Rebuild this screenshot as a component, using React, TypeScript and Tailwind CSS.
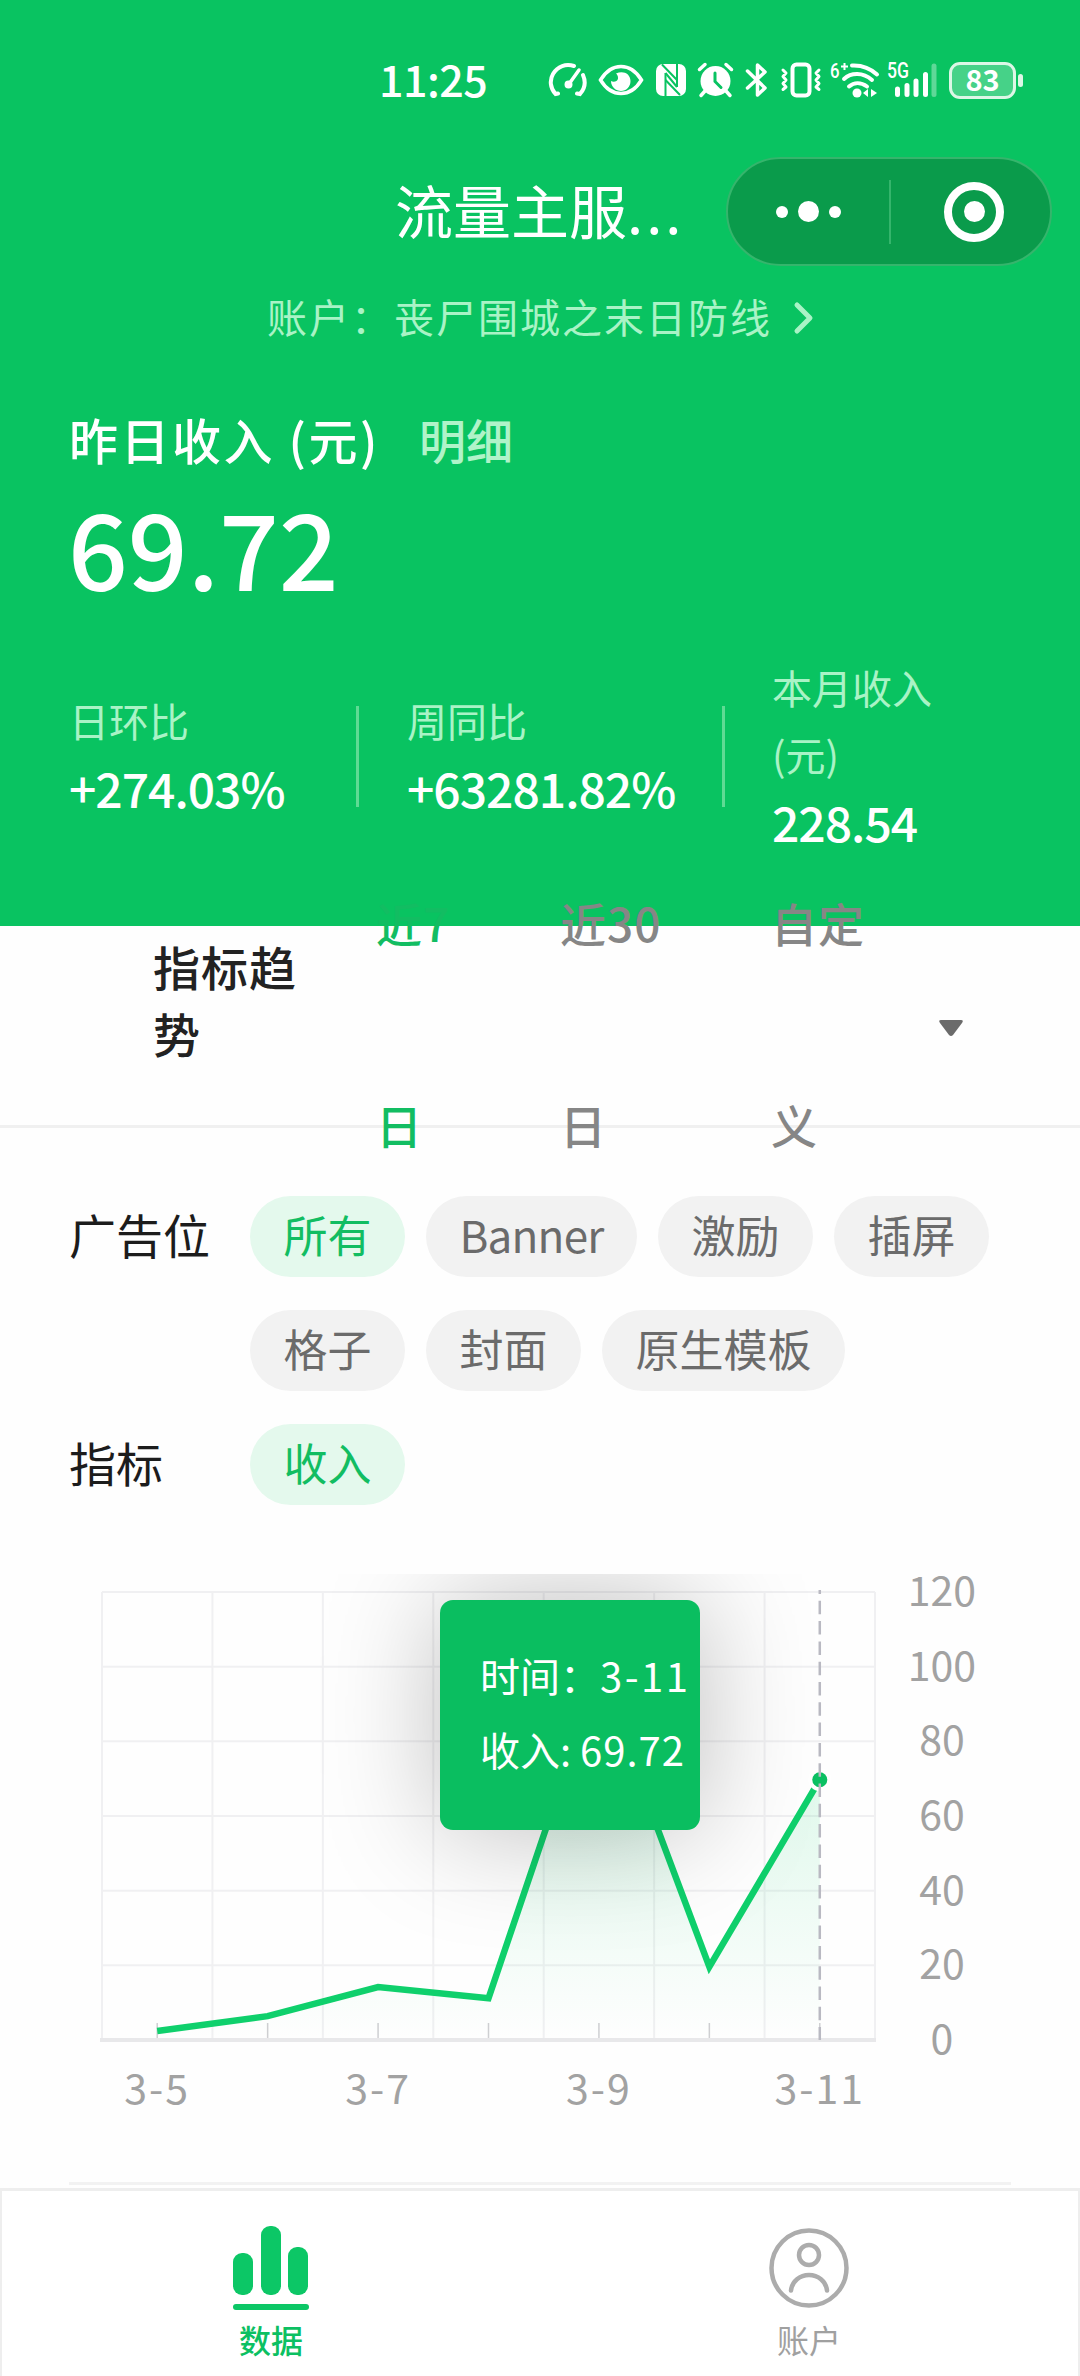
import clsx from "clsx";
import React from "react";

const stats = [
  { label: ["日环比"], value: "+274.03%" },
  { label: ["周同比"], value: "+63281.82%" },
  { label: ["本月收入", "(元)"], value: "228.54" },
];

const ranges = [
  { active: true, className: "ml-[76px] w-[184px]", lines: ["近7", "日"] },
  { className: "w-[211px]", lines: ["近30", "日"] },
  { className: "w-[167px]", lines: ["自定", "义"] },
];

const filters = [
  {
    label: "广告位",
    options: ["所有", "Banner", "激励", "插屏", "格子", "封面", "原生模板"],
  },
  { label: "指标", options: ["收入"] },
];

const points = [
  { date: "3-5", value: 2.4 },
  { date: "3-6", value: 6.4 },
  { date: "3-7", value: 14.2 },
  { date: "3-8", value: 11.2 },
  { date: "3-9", value: 98.5 },
  { date: "3-10", value: 19.6 },
  { date: "3-11", value: 69.72 },
];

const PLOT = { bottom: 466, left: 102, right: 875, top: 18 };
const STEP = (PLOT.right - PLOT.left) / points.length;
const toX = (index: number) => PLOT.left + STEP * (index + 0.5);
const toY = (value: number) =>
  PLOT.bottom - (value / 120) * (PLOT.bottom - PLOT.top);

const StatusIcons = () => (
  <div className="flex items-center text-white">
    <svg width="40" height="36" viewBox="0 0 40 36" fill="none" stroke="currentColor" strokeWidth="4" strokeLinecap="round">
      <path d="M10 31.5 7.5 32C2 26 1.500 18 5 12 9.500 4 18 1.500 26 4" />
      <path d="M35 13c3 7 1.500 14-3 19l-3-.5" />
      <path d="m21 22 10-14" strokeWidth="3.500" />
      <circle cx="20.500" cy="22.500" r="3" fill="currentColor" strokeWidth="2" />
    </svg>
    <svg className="ml-2.5" width="46" height="32" viewBox="0 0 46 32" fill="none" stroke="currentColor" strokeWidth="3.500">
      <path d="M2.500 16C8 7 15 2.500 23 2.500S38 7 43.500 16C38 25 31 29.500 23 29.500S8 25 2.500 16Z" />
      <path d="M13 17c2 1.500 6.500 1 7-2.500.3-2.500-1-4-2-5 7-3.500 14.500 0 14.500 7.500 0 6-4.500 10-9.500 10s-10-4-10-10Z" fill="currentColor" stroke="none" />
    </svg>
    <svg className="ml-[11px]" width="32" height="34" viewBox="0 0 32 34">
      <rect x="1" y="1" width="30" height="32" rx="7" fill="currentColor" />
      <g fill="none" stroke="#09c361" strokeWidth="2">
        <path d="M10.500 33V10M22 24V1" />
        <path d="M7 1.500 22 17M10.500 10 22 24M10.500 17 25 32" strokeWidth="2" />
      </g>
    </svg>
    <svg className="ml-2.5" width="37" height="36" viewBox="0 0 37 36" fill="none" stroke="currentColor" strokeLinecap="round" strokeWidth="3.500">
      <circle cx="18.500" cy="19" r="15" fill="currentColor" stroke="none" />
      <path d="M2.500 7.500 8 2.500M34.500 7.500 29 2.500M8 29l-4 4.500M29 29l4 4.500" />
      <path d="M18 11v8.500l6 6" stroke="#09c361" strokeWidth="3" />
    </svg>
    <svg className="ml-[11px]" width="24" height="36" viewBox="0 0 24 36" fill="none" stroke="currentColor" strokeLinecap="round" strokeLinejoin="round" strokeWidth="3.500">
      <path d="m2.500 9 17.500 17-7.500 7V3L20 10 2.500 26" />
    </svg>
    <svg className="ml-[11px]" width="42" height="36" viewBox="0 0 42 36" fill="none" stroke="currentColor" strokeLinecap="round" strokeLinejoin="round" strokeWidth="4">
      <rect x="12.500" y="2.500" width="17" height="31" rx="4" />
      <path d="m3 8 3 3-3 3.500L6 18l-3 3.500L6 25l-3 2.500M39 8l-3 3 3 3.500-3 3.500 3 3.500-3 3.500 3 2.500" strokeWidth="3" />
    </svg>
    <div className="relative ml-2 h-[36px] w-[50px]">
      <span className="absolute -top-px left-0 origin-left scale-x-[0.8] font-['Roboto',sans-serif] text-[21px] font-medium leading-[20px]">
        6
      </span>
      <svg width="50" height="36" viewBox="0 0 50 36" fill="none" stroke="currentColor" strokeLinecap="round" strokeWidth="4">
        <path d="M11 4.500h7M14.500 1v7" strokeWidth="2" strokeLinecap="butt" />
        <path d="M22 3.500c10-.5 18 2.500 25 9" />
        <path d="M14 17c7-6.500 19-7 28 1" />
        <path d="M19 24.500c5-4.500 12-4.500 18 0" />
        <circle cx="27" cy="31" r="4.500" fill="currentColor" stroke="none" />
        <path d="m38 27-5 4 5 4ZM41 27l6 4-6 4Z" fill="currentColor" stroke="none" />
      </svg>
    </div>
    <div className="relative ml-[7px] h-[36px] w-[50px]">
      <span className="absolute -top-px left-0 origin-left scale-x-[0.8] font-['Roboto',sans-serif] text-[22px] font-medium leading-[20px]">
        5G
      </span>
      <svg width="50" height="36" viewBox="0 0 50 36" stroke="currentColor" strokeLinecap="round" strokeWidth="5">
        <path d="M10.500 27v5.500M20 23.500v9M29 19v13.500M38.500 12.500v20" />
        <path d="M47 4v28.500" opacity=".35" />
      </svg>
    </div>
    <div className="ml-[12px] flex h-[37px] w-[67px] items-center justify-center rounded-[11px] border-[3px] border-[#dcf7e6] bg-white/25 pb-[3px] text-[29px] font-bold leading-none">
      83
    </div>
    <div className="ml-[2px] h-[13px] w-[5px] rounded-full bg-[#dcf7e6]" />
  </div>
);

const Capsule = () => (
  <div className="flex h-[109px] w-[326px] items-center rounded-full border-2 border-[#35b56c] bg-[#0a9b4b]">
    <div className="flex w-[161px] items-center justify-center gap-[10px]">
      <span className="size-3 rounded-full bg-white" />
      <span className="size-[21px] rounded-full bg-white" />
      <span className="size-3 rounded-full bg-white" />
    </div>
    <div className="h-[64px] w-[2px] bg-[#35b56c]" />
    <div className="flex flex-1 items-center justify-center pl-[7px]">
      <div className="flex size-[60px] items-center justify-center rounded-full border-8 border-white">
        <span className="size-[21px] rounded-full bg-white" />
      </div>
    </div>
  </div>
);

const Header = () => (
  <header className="flex h-[926px] flex-col bg-[#09c361] text-white">
    <div className="flex h-[157px] items-center pl-[379px] pt-[3px]">
      <span className="w-[169px] pb-1 text-[43px] font-medium leading-none tracking-[-0.5px]">
        11:25
      </span>
      <StatusIcons />
    </div>

    <div className="flex h-[109px] items-center justify-between pl-[395px] pr-[28px]">
      <h1 className="whitespace-nowrap pb-[5px] text-[58px] leading-none">
        流量主服<span className="tracking-[3px]">...</span>
      </h1>
      <Capsule />
    </div>

    <div className="flex h-[100px] items-center pl-[267px] text-[40px] tracking-[2px] text-[#a9f3c6]">
      <span className="w-[127px]">账户：</span>
      <span>丧尸围城之末日防线</span>
      <svg className="ml-[21px] mt-[3px]" width="22" height="34" viewBox="0 0 22 34" fill="none" stroke="currentColor" strokeLinecap="round" strokeLinejoin="round" strokeWidth="5">
        <path d="m4 4 13 13L4 30" />
      </svg>
    </div>

    <div className="flex h-[146px] items-center pl-[69px]">
      <span className="w-[350px] whitespace-nowrap text-[49px] font-medium tracking-[2.500px]">
        昨日收入 (元)
      </span>
      <span className="text-[47px] font-medium text-[#b0f3c9]">明细</span>
    </div>

    <div className="-mt-[6px] pl-[68px] text-[105px] font-medium leading-[78px]">
      69.72
    </div>

    <div className="mt-[6px] flex h-[332px] items-center">
      {stats.map((stat, index) => (
        <React.Fragment key={stat.value}>
          {index > 0 && <div className="h-[101px] w-[3px] bg-[#5fdb94]" />}
          <div
            className={clsx(
              "-mt-1 leading-[67px]",
              index === 0 && "w-[356px] pl-[69px]",
              index === 1 && "w-[363px] pl-[48px]",
              index === 2 && "pl-[47px]",
            )}
          >
            {stat.label.map((line) => (
              <div key={line} className="text-[40px] text-[#a9f3c6]">
                {line}
              </div>
            ))}
            <div className="text-[48px] font-medium tracking-[-1px]">
              {stat.value}
            </div>
          </div>
        </React.Fragment>
      ))}
    </div>
  </header>
);

const TrendBar = () => (
  <div className="flex h-[202px] items-center border-b-[3px] border-[#f0f0f0] pl-[153px]">
    <h2 className="w-[147px] pb-[53px] text-[47px] font-medium leading-[67px] tracking-[1px] text-[#222]">
      指标趋势
    </h2>
    {ranges.map((range) => (
      <button
        key={range.lines[0]}
        className={clsx(
          "-mt-[5px] text-left text-[46px] font-medium leading-[202px] tracking-[1px]",
          range.className,
          range.active ? "text-[#12bd62]" : "text-[#868686]",
        )}
      >
        {range.lines.map((line) => (
          <span key={line} className="block">
            {line}
          </span>
        ))}
      </button>
    ))}
    <svg className="mt-[5px]" width="26" height="17" viewBox="0 0 26 17" fill="#6b6b6b">
      <path d="M3 0h20q3 0 1 3L15 15q-2 2-4 0L2 3Q0 0 3 0Z" />
    </svg>
  </div>
);

const Filters = () => (
  <section className="flex flex-col gap-[33px] pl-[69px] pt-[68px]">
    {filters.map((filter) => (
      <div key={filter.label} className="flex">
        <span className="w-[181px] shrink-0 text-[47px] leading-[76px] text-[#1c1c1c]">
          {filter.label}
        </span>
        <div className="flex flex-wrap gap-x-[21px] gap-y-[33px]">
          {filter.options.map((option, index) => (
            <button
              key={option}
              className={clsx(
                "h-[81px] rounded-full px-[33.5px] pb-[5px] text-[44px]",
                option === "Banner" && "tracking-[-0.8px]",
                index === 0
                  ? "bg-[#e4f9ed] text-[#12bd62]"
                  : "bg-[#f2f2f2] text-[#6b6b6b]",
              )}
            >
              {option}
            </button>
          ))}
        </div>
      </div>
    ))}
  </section>
);

const Chart = () => {
  const line = points.map((p, i) => `${toX(i)},${toY(p.value)}`).join(" ");
  const last = points.length - 1;

  return (
    <section className="relative mt-[69px] h-[608px] overflow-hidden">
      <svg width="1080" height="608" viewBox="0 0 1080 608">
        <defs>
          <linearGradient id="area" x1="0" y1="0" x2="0" y2="1">
            <stop offset="0" stopColor="#0fd06c" stopOpacity=".18" />
            <stop offset="1" stopColor="#0fd06c" stopOpacity="0" />
          </linearGradient>
        </defs>

        <g stroke="#f0f0f2" strokeWidth="2">
          {[20, 40, 60, 80, 100, 120].map((v) => (
            <path key={v} d={`M${PLOT.left} ${toY(v)}H${PLOT.right}`} />
          ))}
          {[0, 1, 2, 3, 4, 5, 6, 7].map((i) => (
            <path key={i} d={`M${PLOT.left + STEP * i} ${PLOT.top}V${PLOT.bottom}`} />
          ))}
        </g>
        <path d={`M100 ${PLOT.bottom}H876`} stroke="#e8e8ea" strokeWidth="4" />
        {points.map((p, i) => (
          <path key={p.date} d={`M${toX(i)} 449v15`} stroke="#cfcfd2" strokeWidth="1.500" />
        ))}

        <polygon
          points={`${toX(0)},${PLOT.bottom} ${line} ${toX(last)},${PLOT.bottom}`}
          fill="url(#area)"
        />
        <polyline points={line} fill="none" stroke="#0fd06c" strokeWidth="6.500" />
        <circle cx={toX(last)} cy={toY(69.72)} r="11.500" fill="#fff" />
        <circle cx={toX(last)} cy={toY(69.72)} r="7.500" fill="#0ac062" />
        <path
          d={`M${toX(last)} 16V${PLOT.bottom}`}
          stroke="#b9b9c2"
          strokeWidth="2.500"
          strokeDasharray="13.500 6.800"
          strokeDashoffset="9.500"
        />

        <g fill="#a2a2a2" fontSize="41" textAnchor="middle">
          {[0, 20, 40, 60, 80, 100, 120].map((v) => (
            <text key={v} x="942" y={toY(v) + 14}>
              {v}
            </text>
          ))}
          {points
            .filter((_, i) => i % 2 === 0)
            .map((p, i) => (
              <text key={p.date} x={toX(i * 2)} y="530" letterSpacing="2">
                {p.date}
              </text>
            ))}
        </g>
      </svg>

      <div className="absolute left-[440px] top-[26px] h-[230px] w-[260px] whitespace-nowrap rounded-[13px] bg-[#0abe60] pl-[40px] pt-[38px] text-[40px] leading-[74px] text-white shadow-[0_0_115px_rgba(0,0,0,0.26)]">
        <div>
          时间：<span className="tracking-[2.500px]">3-11</span>
        </div>
        <div>
          收入: <span className="tracking-[1px]">69.72</span>
        </div>
      </div>
    </section>
  );
};

const TabBar = () => (
  <nav className="mt-[3px] grid h-[188px] grid-cols-2 border-x-2 border-t-[3px] border-[#eee] bg-white text-[32px]">
    <div className="flex flex-col items-center pt-[35px] font-medium text-[#0cc062]">
      <svg width="76" height="84" viewBox="0 0 76 84" fill="#0cc766">
        <rect x="0" y="27" width="20" height="42" rx="9" />
        <rect x="28" y="0" width="20" height="69" rx="9" />
        <rect x="55" y="21" width="20" height="48" rx="9" />
        <rect x="0" y="78" width="76" height="6" rx="3" />
      </svg>
      <span className="mt-[5px] leading-[48px]">数据</span>
    </div>
    <div className="flex flex-col items-center pt-[37px] text-[#a0a0a0]">
      <svg width="80" height="80" viewBox="0 0 80 80" fill="none" stroke="#acacac" strokeWidth="4.500">
        <circle cx="40" cy="40" r="37.500" />
        <circle cx="40" cy="27" r="10" />
        <path d="M22 62.500C23 53 31 47 40 47s17 6 18 15.500" strokeLinecap="round" />
      </svg>
      <span className="mt-[7px] leading-[48px]">账户</span>
    </div>
  </nav>
);

const App = () => (
  <main className="h-[2376px] w-[1080px] overflow-hidden bg-[#fefefe] font-['Noto_Sans_CJK_SC',sans-serif]">
    <Header />
    <TrendBar />
    <Filters />
    <Chart />
    <div className="mx-[69px] h-[3px] bg-[#f2f2f2]" />
    <TabBar />
  </main>
);

export default App;
